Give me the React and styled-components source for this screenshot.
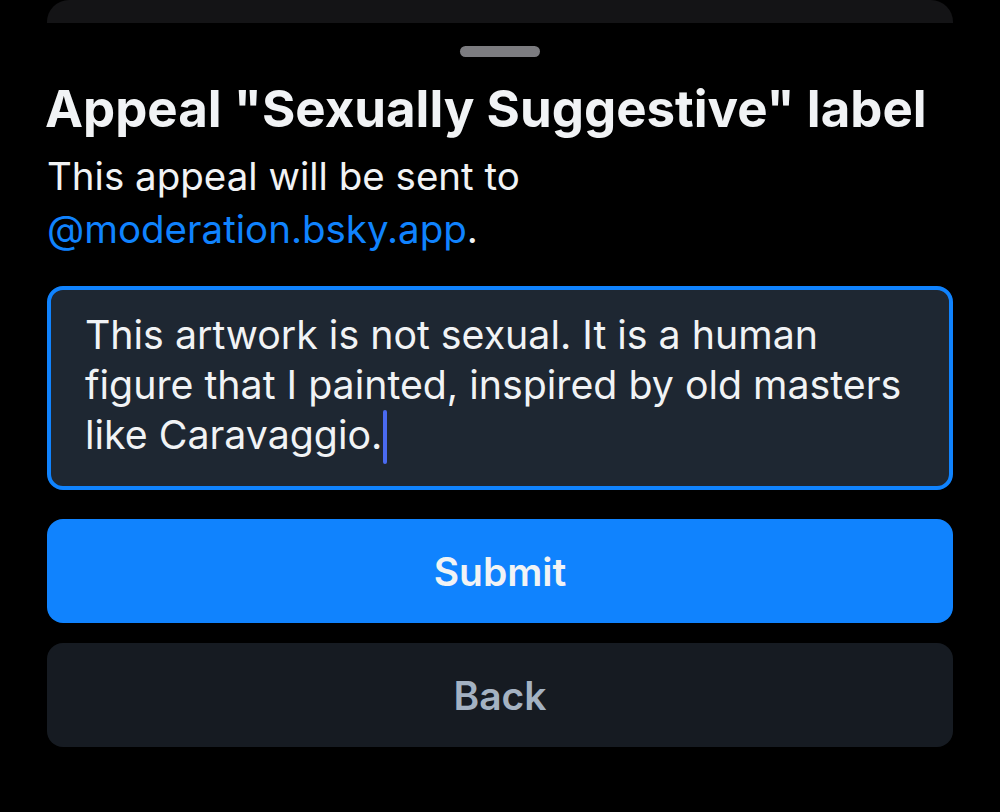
import styled, { createGlobalStyle } from "styled-components";

const GlobalStyle = createGlobalStyle`
  html, body {
    margin: 0;
    padding: 0;
    background: #000;
  }
  body {
    font-family: Inter, "Noto Sans", "Liberation Sans", sans-serif;
    -webkit-font-smoothing: antialiased;
  }
`;

const App = () => {
  return (
    <>
      <GlobalStyle />
      <Page>
        <BackSheet />
        <Sheet>
          <Handle />
          <Title>Appeal "Sexually Suggestive" label</Title>
          <Subtitle>
            This appeal will be sent to
            <br />
            <Link>@moderation.bsky.app</Link>.
          </Subtitle>
          <Field>
            This artwork is not sexual. It is a human figure that I painted,
            inspired by old masters like Caravaggio.
            <Caret />
          </Field>
          <Buttons>
            <Button $primary>Submit</Button>
            <Button>Back</Button>
          </Buttons>
        </Sheet>
      </Page>
    </>
  );
};

export default App;

const Page = styled.div`
  width: 1000px;
  height: 812px;
  overflow: hidden;
  padding: 0 47px;
  box-sizing: border-box;
`;

// the sheet underneath, peeking out at the top
const BackSheet = styled.div`
  height: 23px;
  background: #141416;
  border-top-left-radius: 22px;
  border-top-right-radius: 22px;
`;

const Sheet = styled.div`
  display: flex;
  flex-direction: column;
`;

const Handle = styled.div`
  align-self: center;
  width: 80px;
  height: 11px;
  border-radius: 6px;
  background: #7c7c80;
  margin-top: 23px;
`;

const Title = styled.h1`
  margin: 22px 0 0 -2px;
  font-size: 51px;
  line-height: 60px;
  font-weight: 700;
  color: #f1f3f5;
  white-space: nowrap;
`;

const Subtitle = styled.p`
  margin: 11px 0 0;
  font-size: 38.5px;
  line-height: 53px;
  color: #f1f3f5;
`;

const Link = styled.span`
  color: #1083fe;
`;

const Field = styled.div`
  margin-top: 30px;
  height: 204px;
  box-sizing: border-box;
  border: 4px solid #1083fe;
  border-radius: 16px;
  background: #1e2732;
  padding: 20px 20px 0 34px;
  font-size: 39.3px;
  line-height: 50px;
  color: #f1f3f5;
`;

const Caret = styled.span`
  display: inline-block;
  width: 4px;
  height: 54px;
  margin-left: 1px;
  border-radius: 2px;
  background: #4a6af0;
  vertical-align: -15px;
`;

const Buttons = styled.div`
  display: flex;
  flex-direction: column;
  gap: 20px;
  margin-top: 29px;
`;

const Button = styled.button`
  height: 104px;
  border: none;
  border-radius: 16px;
  font-family: inherit;
  font-size: 39px;
  font-weight: 600;
  background: ${(p) => (p.$primary ? "#1083fe" : "#161b22")};
  color: ${(p) => (p.$primary ? "#f1f3f5" : "#a4b2c2")};
`;
